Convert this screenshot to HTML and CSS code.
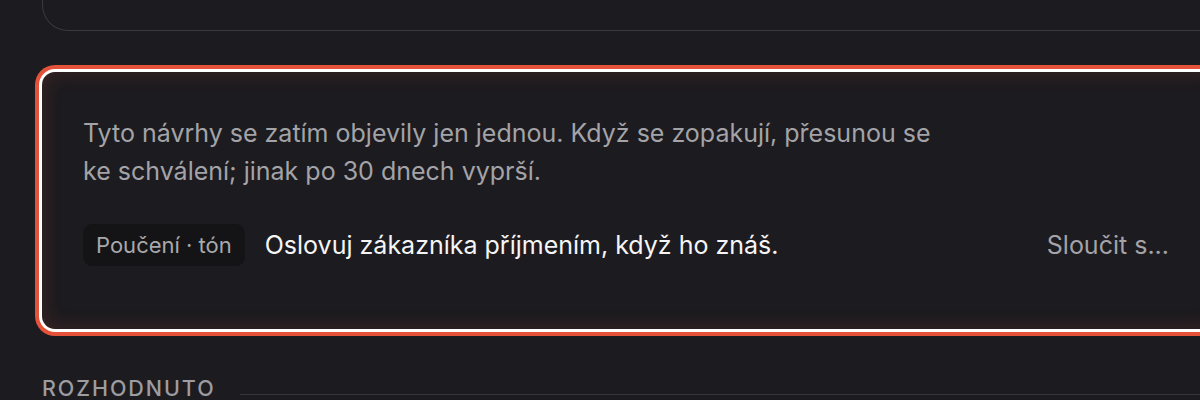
FILE: index.html
```html
<!DOCTYPE html>
<html lang="cs">
<head>
<meta charset="utf-8">
<link rel="stylesheet" href="styles.css">
</head>
<body>
<div class="page">
  <div class="prev-card"></div>
  <section class="card">
    <p class="intro">Tyto návrhy se zatím objevily jen jednou. Když se zopakují, přesunou se ke schválení; jinak po 30 dnech vyprší.</p>
    <div class="row">
      <span class="tag">Poučení · tón</span>
      <span class="rule-text">Oslovuj zákazníka příjmením, když ho znáš.</span>
      <button class="merge">Sloučit s...</button>
    </div>
  </section>
  <div class="section-head">
    <span class="section-title">ROZHODNUTO</span>
    <span class="section-line"></span>
  </div>
</div>
</body>
</html>
```

FILE: styles.css
```css
html, body {
  margin: 0;
  padding: 0;
  background: #1c1b1f;
  overflow: hidden;
  height: 400px;
}
body {
  font-family: Inter, "Liberation Sans", sans-serif;
  color: #a3a3a8;
}
.page {
  width: 1180px;
  padding-left: 42px;
}
.prev-card {
  height: 30px;
  border: 1px solid #3a393e;
  border-top: 0;
  border-radius: 0 0 26px 26px;
}
.card {
  margin-top: 41px;
  height: 257px;
  box-sizing: border-box;
  padding: 42px 41px 0 41px;
  border-radius: 13px;
  background: #1c1b1f;
  box-shadow:
    inset 0 0 20px rgba(229, 83, 59, 0.18),
    0 0 0 3px #ffffff,
    0 0 0 7px #e4523a;
}
.intro {
  margin: 0;
  max-width: 870px;
  font-size: 25px;
  line-height: 38px;
  color: #a3a3a8;
}
.row {
  display: flex;
  align-items: center;
  margin-top: 34px;
  gap: 20px;
}
.tag {
  background: #141416;
  color: #a8a8ad;
  font-size: 22px;
  padding: 0 13px;
  height: 42px;
  line-height: 42px;
  border-radius: 9px;
}
.rule-text {
  flex: 1;
  color: #f5f5f6;
  font-size: 25px;
}
.merge {
  background: none;
  border: 0;
  padding: 0 12px;
  font-family: inherit;
  font-size: 25px;
  color: #a3a3a8;
}
.section-head {
  display: flex;
  align-items: flex-end;
  gap: 24px;
  margin-top: 46px;
}
.section-title {
  font-size: 21.5px;
  font-weight: 500;
  letter-spacing: 0.09em;
  color: #9c9ca1;
  line-height: 26px;
}
.section-line {
  flex: 1;
  height: 1px;
  background: #37363b;
  margin-bottom: 6px;
}
```
